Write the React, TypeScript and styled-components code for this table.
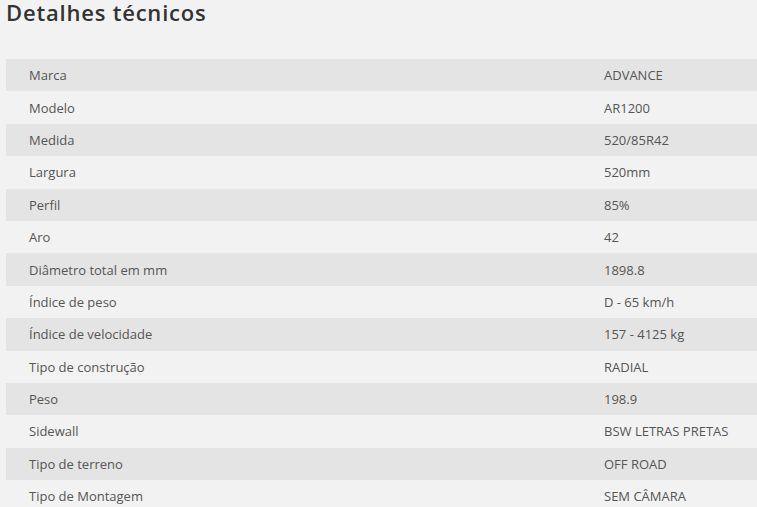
import React from "react";
import styled, { createGlobalStyle } from "styled-components";

const Global = createGlobalStyle`
  html, body { margin: 0; padding: 0; background: #f2f2f2; }
  body { font-family: "Open Sans", "Liberation Sans", sans-serif; overflow: hidden; }
`;

const Page = styled.div`
  padding: 0 0 0 6px;
  width: 757px;
  box-sizing: border-box;
`;

const Title = styled.h2`
  margin: 0;
  padding-top: 1px;
  font-size: 22px;
  line-height: 22px;
  font-weight: 600;
  color: #333;
  letter-spacing: 0.8px;
`;

const Table = styled.div`
  margin-top: 36px;
  display: grid;
  grid-template-columns: 575px 1fr;
`;

const Row = styled.div<{ $shade: boolean }>`
  display: contents;
  & > div {
    background: ${(p) => (p.$shade ? "#e4e4e4" : "transparent")};
  }
`;

const Cell = styled.div`
  height: 32.4px;
  display: flex;
  align-items: center;
  padding: 0 23px;
  font-size: 13px;
  color: #555;
  white-space: nowrap;
`;

const rows: [string, string][] = [
  ["Marca", "ADVANCE"],
  ["Modelo", "AR1200"],
  ["Medida", "520/85R42"],
  ["Largura", "520mm"],
  ["Perfil", "85%"],
  ["Aro", "42"],
  ["Diâmetro total em mm", "1898.8"],
  ["Índice de peso", "D - 65 km/h"],
  ["Índice de velocidade", "157 - 4125 kg"],
  ["Tipo de construção", "RADIAL"],
  ["Peso", "198.9"],
  ["Sidewall", "BSW LETRAS PRETAS"],
  ["Tipo de terreno", "OFF ROAD"],
  ["Tipo de Montagem", "SEM CÂMARA"],
];

export default function App() {
  return (
    <>
      <Global />
      <Page>
        <Title>Detalhes técnicos</Title>
        <Table>
          {rows.map(([k, v], i) => (
            <Row key={k} $shade={i % 2 === 0}>
              <Cell>{k}</Cell>
              <Cell>{v}</Cell>
            </Row>
          ))}
        </Table>
      </Page>
    </>
  );
}
